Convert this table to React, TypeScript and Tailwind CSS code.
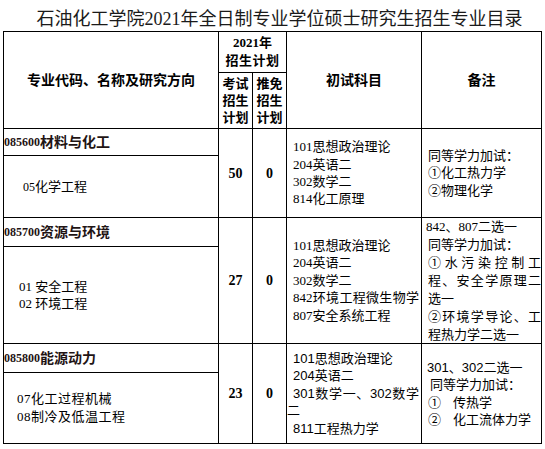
import React from "react";

function J({ tokens, className = "" }: { tokens: string[]; className?: string }) {
  return (
    <div className={"flex justify-between " + className}>
      {tokens.map((t, i) => (
        <span key={i}>{t}</span>
      ))}
    </div>
  );
}

const cell = "bg-white";

export default function App() {
  return (
    <div className="w-[545px] h-[449px] bg-white text-black font-['Liberation_Serif','Noto_Sans_CJK_SC',serif]">
      <div className="h-[31px] pt-[9px] pl-[14px] text-center text-[18px] leading-[21px] text-[#1a1a1a] whitespace-nowrap">
        石油化工学院2021年全日制专业学位硕士研究生招生专业目录
      </div>
      <div className="ml-[3px] w-[539px] grid grid-cols-[214px_33px_33px_134px_119px] grid-rows-[40px_55px_26px_61px_28px_96px_28px_70px] gap-[1px] bg-black p-[1px]">
        {/* header */}
        <div className={cell + " col-start-1 row-start-1 row-span-2 flex items-center justify-center font-bold text-[14px]"}>
          专业代码、名称及研究方向
        </div>
        <div className={cell + " col-start-2 col-span-2 row-start-1 flex flex-col items-center justify-center font-bold text-[13px] leading-[18px]"}>
          <div>2021年</div>
          <div className="tracking-[0.5px]">招生计划</div>
        </div>
        <div className={cell + " col-start-2 row-start-2 flex flex-col items-center justify-center font-bold text-[13px] leading-[17px]"}>
          <div>考试</div>
          <div>招生</div>
          <div>计划</div>
        </div>
        <div className={cell + " col-start-3 row-start-2 flex flex-col items-center justify-center font-bold text-[13px] leading-[17px]"}>
          <div>推免</div>
          <div>招生</div>
          <div>计划</div>
        </div>
        <div className={cell + " col-start-4 row-start-1 row-span-2 flex items-center justify-center font-bold text-[14px]"}>
          初试科目
        </div>
        <div className={cell + " col-start-5 row-start-1 row-span-2 flex items-center justify-center font-bold text-[14px]"}>
          备注
        </div>

        {/* section 1 */}
        <div className={cell + " col-start-1 row-start-3 flex items-center font-bold text-[14px] text-[#1f1414]"}>
          <span className="text-[12px]">085600</span>材料与化工
        </div>
        <div className={cell + " col-start-1 row-start-4 flex items-center pl-[19px] text-[13px]"}>
          <span className="text-[12px]">05</span>化学工程
        </div>
        <div className={cell + " col-start-2 row-start-3 row-span-2 flex items-center justify-center font-bold text-[14px]"}>50</div>
        <div className={cell + " col-start-3 row-start-3 row-span-2 flex items-center justify-center font-bold text-[14px]"}>0</div>
        <div className={cell + " col-start-4 row-start-3 row-span-2 flex flex-col justify-center pl-[6px] text-[13px] leading-[17.3px]"}>
          <div>101思想政治理论</div>
          <div>204英语二</div>
          <div>302数学二</div>
          <div>814化工原理</div>
        </div>
        <div className={cell + " col-start-5 row-start-3 row-span-2 flex flex-col justify-center pl-[6px] text-[13px] leading-[17.5px]"}>
          <div>同等学力加试：</div>
          <div>①化工热力学</div>
          <div>②物理化学</div>
        </div>

        {/* section 2 */}
        <div className={cell + " col-start-1 row-start-5 flex items-center font-bold text-[14px] text-[#1f1414]"}>
          <span className="text-[12px]">085700</span>资源与环境
        </div>
        <div className={cell + " col-start-1 row-start-6 flex flex-col justify-center pl-[15px] text-[13px] leading-[17.5px]"}>
          <div>01 安全工程</div>
          <div>02 环境工程</div>
        </div>
        <div className={cell + " col-start-2 row-start-5 row-span-2 flex items-center justify-center font-bold text-[14px]"}>27</div>
        <div className={cell + " col-start-3 row-start-5 row-span-2 flex items-center justify-center font-bold text-[14px]"}>0</div>
        <div className={cell + " col-start-4 row-start-5 row-span-2 flex flex-col justify-center pl-[6px] pr-[2px] text-[13px] leading-[17.5px]"}>
          <div>101思想政治理论</div>
          <div>204英语二</div>
          <div>302数学二</div>
          <J tokens={["842", "环", "境", "工", "程", "微", "生", "物", "学"]} />
          <div>807安全系统工程</div>
        </div>
        <div className={cell + " col-start-5 row-start-5 row-span-2 flex flex-col justify-center pl-[4px] text-[13px] leading-[18px]"}>
          <div>842、807二选一</div>
          <div className="pl-[2px]">同等学力加试：</div>
          <J className="pl-[2px]" tokens={["①", "水", "污", "染", "控", "制", "工"]} />
          <J className="pl-[2px]" tokens={["程", "、", "安", "全", "学", "原", "理", "二"]} />
          <div className="pl-[2px]">选一</div>
          <J className="pl-[2px]" tokens={["②", "环", "境", "学", "导", "论", "、", "工"]} />
          <div className="pl-[2px]">程热力学二选一</div>
        </div>

        {/* section 3 */}
        <div className={cell + " col-start-1 row-start-7 flex items-center font-bold text-[14px] text-[#1f1414]"}>
          <span className="text-[12px]">085800</span>能源动力
        </div>
        <div className={cell + " col-start-1 row-start-8 flex flex-col justify-center pl-[13px] text-[13px] leading-[18px] tracking-[0.5px]"}>
          <div>07化工过程机械</div>
          <div>08制冷及低温工程</div>
        </div>
        <div className={cell + " col-start-2 row-start-7 row-span-2 flex items-center justify-center font-bold text-[14px]"}>23</div>
        <div className={cell + " col-start-3 row-start-7 row-span-2 flex items-center justify-center font-bold text-[14px]"}>0</div>
        <div className={cell + " col-start-4 row-start-7 row-span-2 flex flex-col justify-center pr-[2px] text-[13px] leading-[17.5px] font-['Liberation_Sans','Noto_Sans_CJK_SC',sans-serif]"}>
          <div className="pl-[6px]">101思想政治理论</div>
          <div className="pl-[6px]">204英语二</div>
          <J className="pl-[6px]" tokens={["301", "数", "学", "一", "、", "302", "数", "学"]} />
          <div>二</div>
          <div className="pl-[6px]">811工程热力学</div>
        </div>
        <div className={cell + " col-start-5 row-start-7 row-span-2 flex flex-col justify-center pl-[5px] text-[13px] leading-[17.5px] font-['Liberation_Sans','Noto_Sans_CJK_SC',sans-serif]"}>
          <div>301、302二选一</div>
          <div className="pl-[3px]">同等学力加试：</div>
          <div className="flex pl-[1px]">
            <span className="w-[25px]">①</span>
            <span>传热学</span>
          </div>
          <div className="flex pl-[1px]">
            <span className="w-[25px]">②</span>
            <span>化工流体力学</span>
          </div>
        </div>
      </div>
    </div>
  );
}
